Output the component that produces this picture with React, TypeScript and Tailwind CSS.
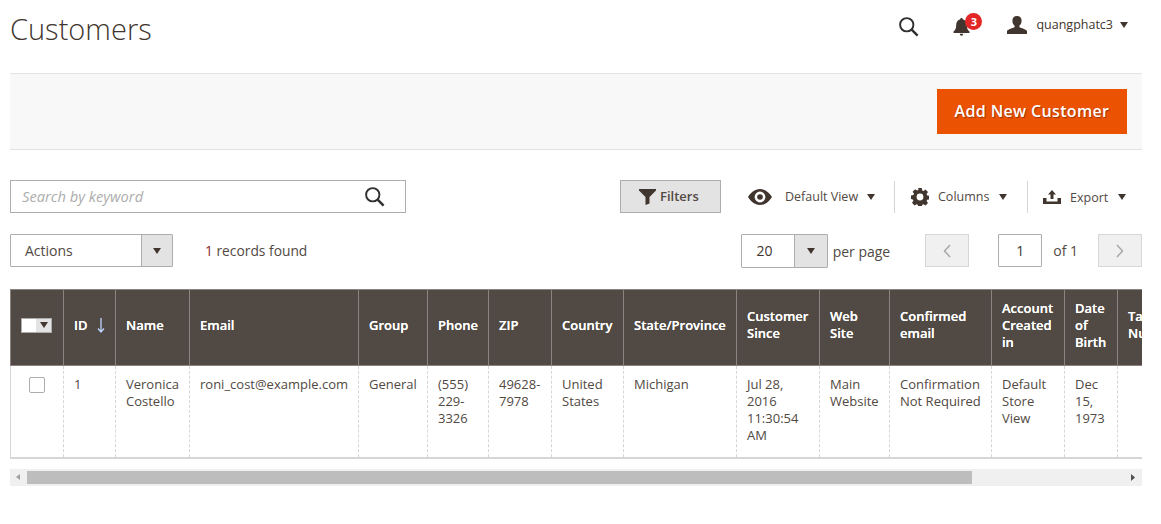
import React from "react";

const Caret = ({ className = "" }: { className?: string }) => (
  <svg width="10" height="6" viewBox="0 0 10 6" preserveAspectRatio="none" className={className}><path d="M0 0h10L5 6z" fill="#41362f" /></svg>
);

const SearchIcon = ({ size = 24 }: { size?: number }) => (
  <svg width={size} height={size} viewBox="0 0 24 24" fill="none" stroke="#303030">
    <circle cx="10" cy="10" r="7.6" strokeWidth="2.2" />
    <path d="M15.6 15.6 22.4 22.4" strokeWidth="2.8" />
  </svg>
);

const Gear = () => (
  <svg width="18" height="18" viewBox="0 0 18 18">
    <path fill="#41362f" fillRule="evenodd" d="M7.2 0h3.6l.4 2.4 1.3.6 2-1.4 2.5 2.5-1.4 2 .6 1.3 2.4.4v3.6l-2.4.4-.6 1.3 1.4 2-2.5 2.5-2-1.4-1.3.6-.4 2.4H7.2l-.4-2.4-1.3-.6-2 1.4L1 14.700l1.400-2-.6-1.300L0 11V7.400l2.400-.4.6-1.300-1.400-2L4.100 1.200l2 1.400 1.300-.6zM9 5.600a3.400 3.400 0 1 0 0 6.800 3.400 3.400 0 0 0 0-6.800z" />
  </svg>
);

type Col = { w: number; h: React.ReactNode; c?: React.ReactNode };
const cols: Col[] = [
  { w: 53, h: null, c: null },
  { w: 52, h: <span className="flex items-center">ID<svg width="8" height="15" viewBox="0 0 8 15" className="ml-[9px]"><path d="M4 0v14M1 10.500l3 3.500 3-3.500" stroke="#bcd4ff" strokeWidth="1.300" fill="none" /></svg></span>, c: <span className="text-[#514943]">1</span> },
  { w: 74, h: "Name", c: "Veronica Costello" },
  { w: 169, h: "Email", c: "roni_cost@example.com" },
  { w: 69, h: "Group", c: "General" },
  { w: 61, h: "Phone", c: "(555) 229-3326" },
  { w: 63, h: "ZIP", c: "49628-7978" },
  { w: 72, h: "Country", c: "United States" },
  { w: 113, h: "State/Province", c: "Michigan" },
  { w: 83, h: "Customer Since", c: "Jul 28, 2016 11:30:54 AM" },
  { w: 70, h: "Web Site", c: "Main Website" },
  { w: 102, h: "Confirmed email", c: "Confirmation Not Required" },
  { w: 73, h: "Account Created in", c: "Default Store View" },
  { w: 53, h: "Date of Birth", c: "Dec 15, 1973" },
  { w: 70, h: "Tax Number", c: "" },
];

const total = cols.reduce((a, c) => a + c.w, 0);

export default function App() {
  return (
    <div className="w-[1161px] h-[524px] overflow-hidden bg-white pl-[10px] pr-[19px] text-[14px] leading-[17px] text-[#41362f] font-['Open_Sans',sans-serif]">
      <header className="h-[73px] flex items-start">
        <h1 className="mt-[10px] text-[29px] leading-[38px] font-light text-[#41362f]">Customers</h1>
        <div className="ml-auto mr-[14px] mt-[14px] flex items-center h-[24px]">
          <SearchIcon size={21} />
          <div className="relative ml-[34px] w-[30px] h-[24px]">
            <svg width="17" height="18" viewBox="0 0 17 18" className="absolute left-0 top-[4px]">
              <path fill="#41362f" d="M8.500 0c.8 0 1.200.5 1.200 1.200C12.300 1.800 13.800 4 13.800 7c0 3 .6 5 2.700 6.600V15H.5v-1.400C2.600 12 3.200 10 3.200 7c0-3 1.500-5.200 4.100-5.800C7.300.5 7.700 0 8.500 0zM6.800 15.800h3.400c0 1.200-.7 2-1.700 2s-1.700-.8-1.700-2z" />
            </svg>
            <span className="absolute left-[12px] top-[-1px] w-[17px] h-[17px] rounded-full bg-[#e22626] text-white text-[11px] leading-[17px] font-bold text-center">3</span>
          </div>
          <svg width="20" height="18" viewBox="0 0 20 20" preserveAspectRatio="none" className="ml-[24px] mb-[3px]">
            <path fill="#41362f" d="M10 0c3 0 4.600 2.200 4.600 5.200 0 2.300-.9 4.400-2.200 5.600v1.500c0 .8 6.600 2.200 7.600 4.500V20H0v-3.200c1-2.300 7.600-3.700 7.600-4.500v-1.500C6.300 9.600 5.400 7.500 5.400 5.200 5.400 2.200 7 0 10 0z" />
          </svg>
          <span className="ml-[9px] mb-[3px] text-[12.5px] text-[#41362f]">quangphatc3</span>
          <Caret className="ml-[7px] w-[8px] mb-[3px]" />
        </div>
      </header>

      <div className="h-[77px] bg-[#f8f8f8] border-y border-[#e3e3e3] flex items-center justify-end pr-[15px]">
        <button className="w-[190px] h-[45px] bg-[#eb5202] text-white text-[16px] font-semibold tracking-[0.35px] [text-shadow:1px_1px_1px_rgba(0,0,0,0.35)]">Add New Customer</button>
      </div>

      <div className="mt-[30px] h-[33px] flex items-center">
        <div className="w-[396px] h-[33px] border border-[#adadad] flex items-center pl-[11px] pr-[20px]">
          <span className="italic text-[14.7px] text-[#adadad]">Search by keyword</span>
          <span className="ml-auto flex"><SearchIcon size={21} /></span>
        </div>
        <button className="ml-[214px] w-[101px] h-[33px] bg-[#e3e3e3] border border-[#adadad] flex items-center pl-[18px] text-[13px] font-semibold text-[#514943]">
          <svg width="17" height="17" viewBox="0 0 17 17" className="mr-[4px]"><path fill="#41362f" d="M0 1h17v1.500L10.500 9v6.500L6.500 17V9L0 2.500z" /></svg>
          Filters
        </button>
        <svg width="24" height="16" viewBox="0 0 24 16" className="ml-[27px]">
          <path fill="#41362f" fillRule="evenodd" d="M12 0c5.500 0 9.500 4 12 8-2.500 4-6.500 8-12 8S2.500 12 0 8c2.500-4 6.500-8 12-8zm0 2.600a5.400 5.400 0 1 0 0 10.800 5.400 5.400 0 0 0 0-10.800z" />
          <circle cx="12" cy="8" r="2.800" fill="#41362f" />
        </svg>
        <span className="ml-[13px] w-[72px] whitespace-nowrap text-[12.5px] text-[#514943]">Default View</span>
        <Caret className="ml-[10px] w-[8px]" />
        <div className="ml-[19px] w-px h-[32px] bg-[#d6d6d6]" />
        <span className="ml-[16px] flex"><Gear /></span>
        <span className="ml-[9px] w-[52px] whitespace-nowrap text-[12.5px] text-[#514943]">Columns</span>
        <Caret className="ml-[9px] w-[8px]" />
        <div className="ml-[20px] w-px h-[32px] bg-[#d6d6d6]" />
        <svg width="18" height="14" viewBox="0 0 18 14" className="ml-[15px] mt-[1px]">
          <path fill="#41362f" d="M9 0l4 4.500H10.500V9h-3V4.500H5zM0 8h3.500v3.500h11V8H18v6H0z" />
        </svg>
        <span className="ml-[9px] w-[38px] text-[12.5px] mt-[1px] text-[#514943]">Export</span>
        <Caret className="ml-[10px] w-[8px]" />
      </div>

      <div className="mt-[21px] h-[33px] flex items-center">
        <div className="w-[163px] h-[33px] border border-[#adadad] rounded-[1px] flex">
          <span className="flex-1 pl-[14px] leading-[31px] text-[#514943]">Actions</span>
          <span className="w-[31px] bg-[#e3e3e3] border-l border-[#adadad] flex items-center justify-center"><Caret className="w-[8px]" /></span>
        </div>
        <span className="ml-[32px] text-[13.8px] text-[#514943]"><span className="text-[#8a2d2d]">1</span> records found</span>
        <div className="ml-auto w-[87px] h-[34px] border border-[#adadad] rounded-[1px] flex">
          <span className="flex-1 text-center leading-[32px] pr-[6px] text-[#41362f]">20</span>
          <span className="w-[33px] bg-[#e3e3e3] border-l border-[#adadad] flex items-center justify-center"><Caret className="w-[8px]" /></span>
        </div>
        <span className="ml-[5px] mt-[1px] text-[#514943]">per page</span>
        <span className="ml-[35px] w-[44px] h-[33px] bg-[#f0f0f0] border border-[#d6d6d6] flex items-center justify-center">
          <svg width="8" height="14" viewBox="0 0 8 14"><path d="M7 1 1.500 7 7 13" stroke="#a8a8a8" strokeWidth="1.500" fill="none" /></svg>
        </span>
        <span className="ml-[29px] w-[44px] h-[33px] border border-[#adadad] rounded-[1px] text-center leading-[31px] text-[#41362f]">1</span>
        <span className="ml-[11px] text-[#514943]">of 1</span>
        <span className="ml-[20px] w-[44px] h-[33px] bg-[#f0f0f0] border border-[#d6d6d6] flex items-center justify-center">
          <svg width="8" height="14" viewBox="0 0 8 14"><path d="M1 1l5.500 6L1 13" stroke="#a8a8a8" strokeWidth="1.500" fill="none" /></svg>
        </span>
      </div>

      <div className="mt-[22px] overflow-hidden">
        <table className="table-fixed border-collapse" style={{ width: total }}>
          <colgroup>{cols.map((c, i) => <col key={i} style={{ width: c.w }} />)}</colgroup>
          <thead>
            <tr className="h-[76px] bg-[#514943]">
              {cols.map((c, i) => (
                <th key={i} className="border-l border-y border-[#8a837f] px-[10px] pb-[5px] text-left align-middle text-[13px] leading-[17px] font-semibold text-white [text-shadow:0_0_0.4px_#ffffff]">
                  {i === 0 ? (
                    <span className="flex w-[31px] h-[15px] border border-[#adadad]">
                      <span className="flex-1 bg-white" />
                      <span className="w-[15px] bg-[#e3e3e3] flex items-center justify-center"><Caret className="w-[8px]" /></span>
                    </span>
                  ) : c.h}
                </th>
              ))}
            </tr>
          </thead>
          <tbody>
            <tr className="h-[92px] border-b-2 border-[#d6d6d6]">
              {cols.map((c, i) => (
                <td key={i} className={`align-top pt-[10px] px-[10px] text-[13px] leading-[17px] text-[#514943] ${i === 0 ? "border-l border-[#d6d6d6]" : "border-l border-dashed border-[#d6d6d6]"}`}>
                  {i === 0 ? <span className="block ml-[8px] mt-[1px] w-[16px] h-[16px] border border-[#adadad] rounded-[2px]" /> : c.c}
                </td>
              ))}
            </tr>
          </tbody>
        </table>
      </div>

      <div className="mt-[10px] h-[17px] bg-[#f0f0f0] flex items-center">
        <svg width="4" height="6" viewBox="0 0 4 6" className="ml-[6px]"><path d="M4 0v6L0 3z" fill="#a0a0a0" /></svg>
        <div className="ml-[7px] w-[945px] h-[13px] bg-[#bdbdbd]" />
        <svg width="4" height="7" viewBox="0 0 4 7" className="ml-auto mr-[7px]"><path d="M0 0v7l4-3.500z" fill="#50504f" /></svg>
      </div>
    </div>
  );
}
